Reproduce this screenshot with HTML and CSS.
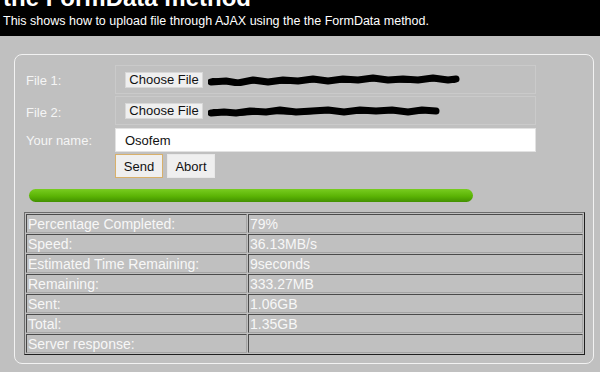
FILE: index.html
```html
<!DOCTYPE html>
<html lang="en">
<head>
    <meta charset="UTF-8">
    <meta name="viewport" content="width=device-width, initial-scale=1.0">
    <title>Upload file through AJAX</title>
    <link rel="stylesheet" href="styles.css">
</head>
<body>
    <header class="top">
        <h1>the FormData method</h1>
        <p>This shows how to upload file through AJAX using the the FormData method.</p>
    </header>

    <form class="upload-box" onsubmit="return false">
        <div class="field-row">
            <label>File 1:</label>
            <div class="file-pick">
                <button type="button" class="file-btn">Choose File</button>
                <svg class="scribble" width="252" height="12" viewBox="0 0 252 12">
                    <path d="M3 8 L18 7 L30 9 L45 6 L60 8 L75 6 L90 7 L105 5 L120 7 L135 5 L150 6 L165 4 L180 6 L195 5 L210 6 L225 4 L240 6 L248 5"/>
                    <path class="thin" d="M5 6 L25 9 L50 7 L80 8 L110 6 L140 7 L170 5 L200 7 L230 5 L246 7"/>
                </svg>
            </div>
        </div>
        <div class="field-row">
            <label>File 2:</label>
            <div class="file-pick">
                <button type="button" class="file-btn">Choose File</button>
                <svg class="scribble" width="232" height="12" viewBox="0 0 232 12">
                    <path d="M3 8 L16 7 L28 8 L42 6 L58 7 L72 5 L88 7 L104 6 L120 5 L136 7 L152 5 L168 6 L184 5 L200 7 L214 5 L228 6"/>
                    <path class="thin" d="M6 6 L30 9 L60 7 L90 8 L120 6 L150 7 L180 6 L210 7 L226 5"/>
                </svg>
            </div>
        </div>
        <div class="field-row name-row">
            <label>Your name:</label>
            <input type="text" class="name-input" value="Osofem">
        </div>
        <div class="field-row actions">
            <span></span>
            <div class="btn-group">
                <button type="button" class="btn btn-send">Send</button>
                <button type="button" class="btn">Abort</button>
            </div>
        </div>

        <div class="progress">
            <div class="progress-bar" style="width: 79%"></div>
        </div>

        <table class="stats">
            <tr><td class="stat-label">Percentage Completed:</td><td>79%</td></tr>
            <tr><td class="stat-label">Speed:</td><td>36.13MB/s</td></tr>
            <tr><td class="stat-label">Estimated Time Remaining:</td><td>9seconds</td></tr>
            <tr><td class="stat-label">Remaining:</td><td>333.27MB</td></tr>
            <tr><td class="stat-label">Sent:</td><td>1.06GB</td></tr>
            <tr><td class="stat-label">Total:</td><td>1.35GB</td></tr>
            <tr><td class="stat-label">Server response:</td><td></td></tr>
        </table>
    </form>
</body>
</html>
```

FILE: styles.css
```css
* {
    box-sizing: border-box;
}

body {
    margin: 0;
    background-color: #c0c0c0;
    font-family: 'Liberation Sans', Arial, sans-serif;
    color: #f5f5f5;
}

.top {
    background-color: #000;
    height: 36px;
    padding: 0 3px;
    overflow: hidden;
}

.top h1 {
    margin: -14px 0 0;
    font-size: 24px;
    line-height: 24px;
    font-weight: bold;
    color: #fff;
}

.top p {
    margin: 3px 0 0;
    font-size: 12.5px;
    line-height: 16px;
    color: #fff;
}

.upload-box {
    margin: 18px 6px 0 14px;
    border: 1px solid #f2f2f2;
    border-radius: 8px;
    padding: 10px 0 8px 9px;
}

.field-row {
    display: grid;
    grid-template-columns: 91px 421px;
    align-items: center;
}

.field-row label {
    padding-left: 2px;
    font-size: 13px;
}

.file-pick {
    height: 29px;
    border: 1px solid #cacaca;
    display: flex;
    align-items: center;
    padding-left: 9px;
    margin-bottom: 2px;
}

.field-row:nth-child(2) .file-pick {
    margin-bottom: 3px;
}

.file-btn {
    width: 78px;
    height: 16px;
    padding: 0;
    font-family: inherit;
    font-size: 13px;
    line-height: 14px;
    color: #111;
    background-color: #efefef;
    border: 1px solid #d8d8d8;
}

.scribble {
    margin-left: 5px;
}

.scribble path {
    fill: none;
    stroke: #000;
    stroke-width: 7;
    stroke-linecap: round;
    stroke-linejoin: round;
}

.scribble .thin {
    stroke-width: 4;
}

.name-input {
    height: 24px;
    border: 1px solid #e2e2e2;
    background-color: #fff;
    padding: 0 0 0 9px;
    font-family: inherit;
    font-size: 13px;
    color: #111;
    outline: none;
}

.actions {
    margin-top: 2px;
}

.btn-group {
    display: flex;
    gap: 4px;
}

.btn {
    width: 48px;
    height: 24px;
    padding: 0;
    font-family: inherit;
    font-size: 13px;
    color: #111;
    background-color: #efefef;
    border: 1px solid #e8e8e8;
}

.btn-send {
    border-color: #d8b06a;
}

.progress {
    width: 562px;
    height: 13px;
    margin: 11px 0 0 5px;
}

.progress-bar {
    height: 100%;
    border-radius: 7px;
    background: linear-gradient(#78cc20, #5bb405 55%, #429000);
}

.stats {
    width: 561px;
    margin: 10px 0 0;
    border-collapse: separate;
    border-spacing: 1px;
    border: 1px solid;
    border-color: #6c6c6c #1e1e1e #1e1e1e #6c6c6c;
}

.stats td {
    height: 19px;
    padding: 0 1px;
    font-size: 14px;
    line-height: 16px;
    color: #f7f7f7;
    border: 1px solid;
    border-color: #4a4a4a #a4a4a4 #a4a4a4 #4a4a4a;
    vertical-align: middle;
}

.stats .stat-label {
    width: 221px;
}
```
